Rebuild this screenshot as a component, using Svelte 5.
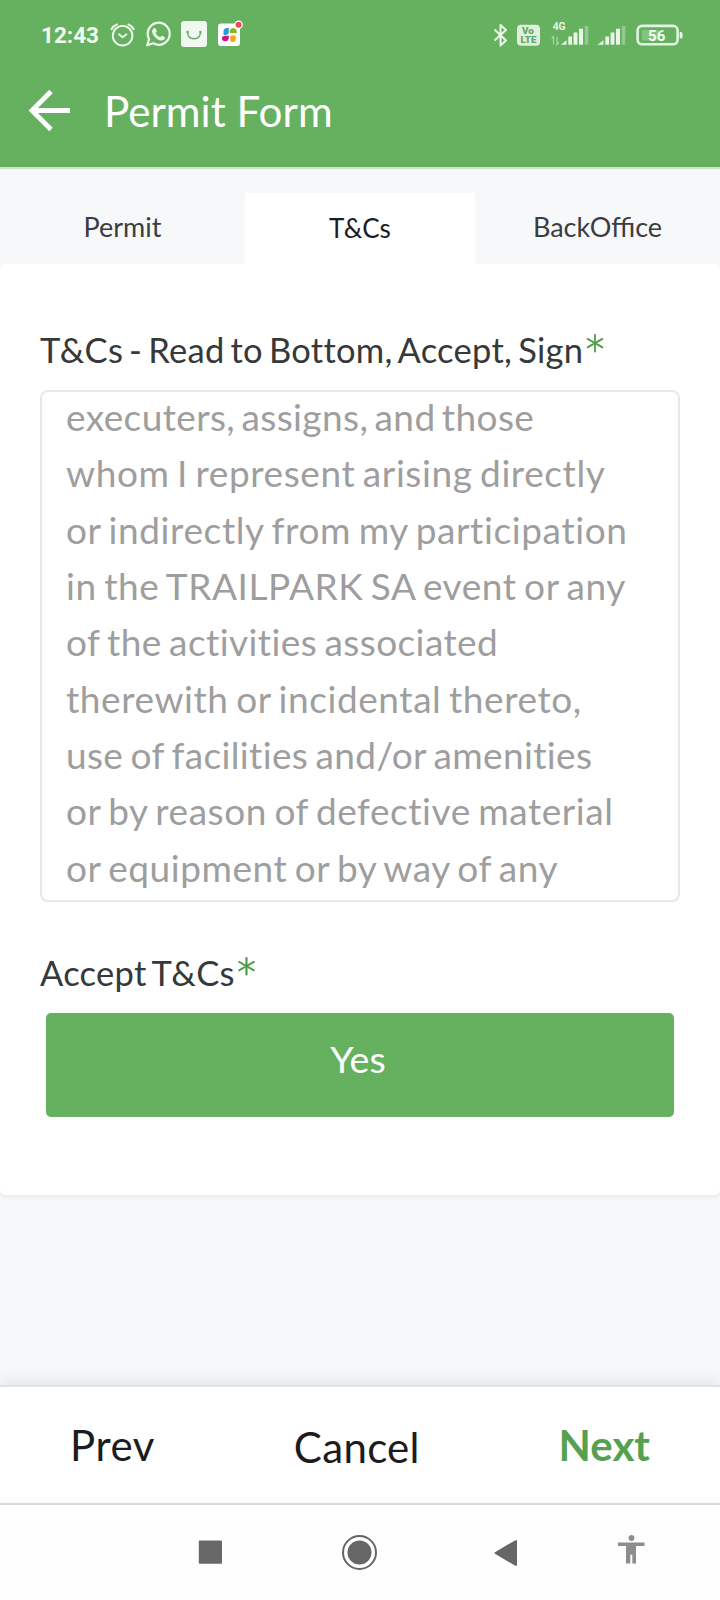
<script>
  const tabs = ['Permit', 'T&Cs', 'BackOffice'];
  const lines = [
    { text: 'executers, assigns, and those', track: 0.39 },
    { text: 'whom I represent arising directly', track: 0.59 },
    { text: 'or indirectly from my participation', track: 0.62 },
    { text: 'in the TRAILPARK SA event or any', track: 0.56 },
    { text: 'of the activities associated', track: 0.41 },
    { text: 'therewith or incidental thereto,', track: 0.58 },
    { text: 'use of facilities and/or amenities', track: 0.36 },
    { text: 'or by reason of defective material', track: 0.55 },
    { text: 'or equipment or by way of any', track: 0.54 }
  ];
  let active = 'T&Cs';
</script>

<div class="screen">
  <div class="status">
    <span class="time">12:43</span>
    <svg class="left" width="138" height="70" viewBox="108 0 138 70">
      <g fill="none" stroke="#f0fbee" stroke-width="1.9" stroke-linecap="round">
        <circle cx="122.6" cy="35.7" r="9.8" />
        <path d="M119 34.3l3.6 3 3.8-3" stroke-linejoin="round" />
        <path d="M111.5 29.2q2-3.5 5.5-4.8M133.7 29.2q-2-3.5-5.5-4.8" />
      </g>
      <path d="M147.2 45.3l1.9-6.2a11 11 0 1 1 4.2 4.2z" fill="none" stroke="#f0fbee" stroke-width="2.2" stroke-linejoin="round" />
      <path d="M153.3 28.6c.9-1 1.900-.9 2.300 0l1.100 2.500c.3.8-.9 1.500-1.100 2 .9 2 2.300 3.300 4.500 4.100.7-.3 1.300-1.700 2-1.500l2.400 1.200c.7.4.3 1.900-.4 2.600-1.700 1.600-4 1.200-6.600-.2-2.700-1.600-5-4.400-5.300-7.200-.1-1.300.4-2.700 1.100-3.500z" fill="#f0fbee" />
      <rect x="181" y="21" width="26" height="26" rx="3" fill="#f0f8ef" />
      <path d="M187.500 32q.3 6.700 6.500 6.700t6.500-6.700" fill="none" stroke="#65a965" stroke-width="1.400" />
      <circle cx="187.600" cy="32" r="1.200" fill="#65a965" /><circle cx="200.400" cy="32" r="1.200" fill="#65a965" />
      <rect x="218" y="23.500" width="22" height="22.500" rx="3" fill="#fff" />
      <path d="M223.500 35v-3.500q0-3.500 3.500-3.500h1.800v3.500q0 3.500-3.500 3.500z" fill="#259bd8" />
      <path d="M229.800 33v-1.500q0-3.500 3.500-3.500 3.700.5 3.700 5z" fill="#8ab52b" />
      <path d="M228.800 35.800v1.700q0 3.700-3.400 3.700-3.500 0-3.500-2.700t3.400-2.700z" fill="#d3147e" />
      <path d="M230.300 35.600h5.400v2.900q0 3.500-3 3.500-2.400 0-2.400-2.800z" fill="#f3a51d" />
      <circle cx="238.600" cy="24.800" r="4.200" fill="#fff" /><circle cx="238.600" cy="24.800" r="3" fill="#f04a5a" />
    </svg>
    <svg class="right" width="200" height="70" viewBox="490 0 200 70">
      <path d="M494.500 29.500l11.500 11-5.500 5V25l5.500 5-11.500 10.500" fill="none" stroke="#ecf8ea" stroke-width="2" stroke-linejoin="round" />
      <rect x="517" y="24.800" width="23" height="21" rx="4" fill="#def0dc" />
      <text x="528" y="34.400" class="volte">Vo</text>
      <text x="528.500" y="43.400" class="volte">LTE</text>
      <text x="552.700" y="30.400" class="net">4G</text>
      <path d="M553.500 44.500v-8l-1.800 2M557 36.500v8l1.800-2" fill="none" stroke="#a9d5a6" stroke-width="1.200" />
      <g fill="#eaf7e8">
        <path d="M561 44.700l5.500-4.400v4.400z" /><rect x="568.300" y="36.500" width="3.800" height="8.200" /><rect x="573.600" y="32.500" width="3.800" height="12.200" /><rect x="579" y="28.700" width="4" height="16" />
        <path d="M597.500 44.700l6-4.400v4.400z" /><rect x="605.300" y="36.500" width="3.800" height="8.200" /><rect x="610.600" y="32.500" width="3.800" height="12.200" /><rect x="616" y="28.700" width="4" height="16" />
      </g>
      <rect x="584.800" y="26" width="3.500" height="18.700" fill="#93ca90" />
      <rect x="621.800" y="26" width="3.500" height="18.700" fill="#93ca90" />
      <rect x="637.600" y="25.900" width="40" height="18.400" rx="4.500" fill="none" stroke="#e3f4e1" stroke-width="2.600" />
      <rect x="642" y="30" width="17" height="10.500" rx="1.500" fill="#85c382" />
      <path d="M679.700 32h1.200q1.600 0 1.600 1.500v3.500q0 1.500-1.600 1.500h-1.200z" fill="#e3f4e1" />
      <text x="656.700" y="40.500" class="pct">56</text>
    </svg>
  </div>

  <header>
    <svg width="44" height="44" viewBox="0 0 44 44">
      <path d="M43 22.500H5M24 3.500L5 22.500 24 41.500" fill="none" stroke="#fff" stroke-width="4.800" />
    </svg>
    <h1>Permit Form</h1>
  </header>

  <nav class="tabs">
    {#each tabs as tab}
      <button class:active={tab === active} onclick={() => (active = tab)}>{tab}</button>
    {/each}
  </nav>

  <main>
    <label class="first" for="terms"><span>T&amp;Cs - Read to Bottom, Accept, Sign</span><b>*</b></label>
    <div class="terms" id="terms">
      {#each lines as line}<p style:letter-spacing="{line.track}px">{line.text}</p>{/each}
    </div>
    <label class="second" for="accept"><span>Accept T&amp;Cs</span><b>*</b></label>
    <button class="accept" id="accept">Yes</button>
  </main>

  <div class="space"></div>

  <footer>
    <button class="prev">Prev</button>
    <button class="cancel">Cancel</button>
    <button class="next">Next</button>
  </footer>

  <div class="system">
    <svg width="720" height="95" viewBox="0 1505 720 95">
      <rect x="198.800" y="1540.500" width="23.200" height="23.300" rx="1" fill="#686868" />
      <circle cx="359.500" cy="1552.500" r="16.500" fill="none" stroke="#666" stroke-width="2" />
      <circle cx="359.500" cy="1552.500" r="12" fill="#666" />
      <path d="M516 1541v24l-20.500-12z" fill="#666" stroke="#666" stroke-width="2" stroke-linejoin="round" />
      <circle cx="631.500" cy="1538" r="2.900" fill="#8d8d8d" />
      <path d="M618 1542.500h26.500v3.500h-8.500v17.500h-3.700v-8.700h-2v8.700H626V1546h-8z" fill="#8d8d8d" />
    </svg>
  </div>
</div>

<style>
  :global(body) { margin: 0; background: #fff; }
  .screen { width: 720px; height: 1600px; overflow: hidden; display: flex; flex-direction: column; background: #f7f8fa; font-family: Lato, sans-serif; }
  button { border: 0; margin: 0; padding: 0; background: none; font-family: inherit; }
  svg { display: block; flex: none; }
  .status { height: 70px; flex: none; display: flex; background: #65b160; padding: 0 30px 0 41px; box-sizing: border-box; }
  .time { width: 67px; font: bold 22.500px/70px Roboto, sans-serif; color: #f3fcf1; }
  .right { margin-left: auto; }
  .volte { font: 900 9.800px Roboto, sans-serif; fill: #65a562; text-anchor: middle; }
  .net { font: bold 10.200px Roboto, sans-serif; fill: #eaf7e8; }
  .pct { font: bold 15px Roboto, sans-serif; fill: #f7fff5; text-anchor: middle; }
  header { height: 99px; flex: none; box-sizing: border-box; display: flex; align-items: flex-start; background: #65b160; border-bottom: 2px solid #cce4cc; padding: 18px 0 0 27px; }
  h1 { margin: -2px 0 0 33px; font-size: 42.200px; font-weight: 400; line-height: 50px; color: #fff; }
  .tabs { height: 95px; flex: none; box-sizing: border-box; padding-top: 24px; display: grid; grid-template-columns: 245px 230px 245px; align-items: start; }
  .tabs button { height: 71px; padding-bottom: 4px; font-size: 27px; color: #3b3c40; }
  .tabs .active { background: #fff; color: #1c1d20; font-size: 26px; padding-bottom: 1px; }
  main { height: 931px; flex: none; box-sizing: border-box; background: #fff; border-radius: 6px; box-shadow: 0 2px 5px rgba(0, 0, 0, .06); padding: 61px 40px 0; clip-path: inset(0 0 -12px 0); }
  label { display: flex; height: 50px; font-size: 34.500px; line-height: 50px; letter-spacing: .28px; word-spacing: -3.100px; color: #36383a; white-space: nowrap; }
  label b { font-size: 60px; font-weight: 300; line-height: 62px; letter-spacing: 0; color: #44983f; margin-left: -1px; -webkit-text-stroke: .3px #44983f; }
  .terms { height: 512px; margin-top: 15px; box-sizing: border-box; border: 2px solid #e7e7e7; border-radius: 8px; padding: 0 24px; overflow: hidden; }
  p { margin: 0; font-size: 37px; line-height: 56.375px; word-spacing: -2.500px; color: #9e9e9e; white-space: nowrap; }
  p:first-child { margin-top: -3.200px; word-spacing: -3.500px; }
  .second { margin-top: 46px; }
  .accept { display: block; width: 628px; height: 104px; margin: 15px 6px 0; padding: 0 4px 14px 0; border-radius: 5px; background: #65b160; color: #fff; font-size: 37.500px; }
  .space { height: 190px; flex: none; }
  footer { height: 120px; flex: none; box-sizing: border-box; border-top: 2px solid #e2e3e4; border-bottom: 2px solid #dadada; background: linear-gradient(#fff 108px, #f9f9f9 116px); box-shadow: 0 -2px 20px rgba(0, 0, 0, .1); display: flex; justify-content: space-between; padding: 0 70px; }
  footer button { font-size: 42px; line-height: 116px; color: #1c1c1c; }
  .prev { letter-spacing: .6px; }
  .cancel { line-height: 120px; letter-spacing: .3px; }
  .next { font-weight: 700; color: #56a151; }
  .system { height: 95px; flex: none; background: #fefefe; }
</style>
